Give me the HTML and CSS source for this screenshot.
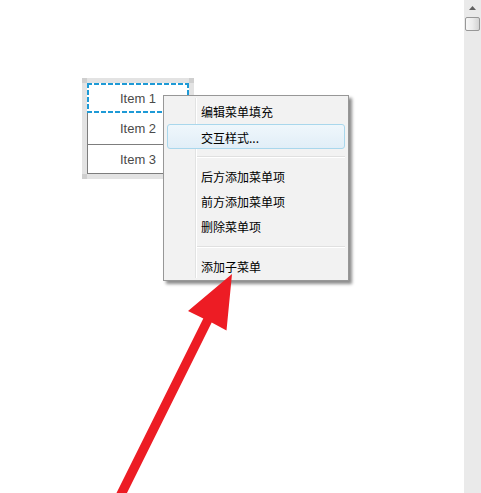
FILE: index.html
```html
<!DOCTYPE html>
<html lang="zh-CN">
<head>
<meta charset="utf-8">
<title>菜单</title>
<link rel="stylesheet" href="styles.css">
</head>
<body>
<div class="app">
  <div class="canvas">
    <div class="widget">
      <div class="items">
        <div class="item sel">Item 1</div>
        <div class="item mid">Item 2</div>
        <div class="item last">Item 3</div>
      </div>
    </div>
    <div class="menu">
      <div class="mi">编辑菜单填充</div>
      <div class="mi hot">交互样式...</div>
      <div class="sep"></div>
      <div class="mi">后方添加菜单项</div>
      <div class="mi">前方添加菜单项</div>
      <div class="mi">删除菜单项</div>
      <div class="sep"></div>
      <div class="mi">添加子菜单</div>
    </div>
    <svg class="arrow" width="464" height="493" viewBox="0 0 464 493">
      <polygon points="232,274 226.5,330.5 211.7,322.6 122.5,502 114,498 203.3,318.4 188,311" fill="#ed1c24"/>
    </svg>
  </div>
  <div class="scrollbar">
    <div class="sb-up"><svg width="7" height="4" viewBox="0 0 7 4"><polygon points="0,4 3.5,0 7,4" fill="#606060"/></svg></div>
    <div class="sb-thumb"></div>
  </div>
</div>
</body>
</html>
```
FILE: styles.css
```css
html, body {
  margin: 0;
  height: 100%;
  background: #fff;
  overflow: hidden;
}

.app {
  display: flex;
  height: 493px;
}

.canvas {
  flex: 1;
  position: relative;
  box-sizing: border-box;
  padding: 78px 0 0 82px;
}

.widget {
  width: 112px;
  box-sizing: border-box;
  padding: 5px;
  background:
    linear-gradient(#cfcfcf, #cfcfcf) left top / 5px 5px no-repeat,
    linear-gradient(#cfcfcf, #cfcfcf) right top / 5px 5px no-repeat,
    linear-gradient(#cfcfcf, #cfcfcf) left bottom / 5px 5px no-repeat,
    linear-gradient(#cfcfcf, #cfcfcf) right bottom / 5px 5px no-repeat,
    #e3e3e3;
}

.items {
  background: #fff;
}

.item {
  box-sizing: border-box;
  font: 13px "Liberation Sans", Arial, sans-serif;
  color: #4a4a4a;
  text-align: center;
}

.item.sel {
  height: 30px;
  line-height: 31px;
  background:
    repeating-linear-gradient(90deg, #1e9ad6 0 5px, transparent 5px 7px) left top / 100% 2px no-repeat,
    repeating-linear-gradient(90deg, #1e9ad6 0 5px, transparent 5px 7px) left bottom / 100% 2px no-repeat,
    repeating-linear-gradient(180deg, #1e9ad6 0 5px, transparent 5px 7px) left top / 2px 100% no-repeat,
    repeating-linear-gradient(180deg, #1e9ad6 0 5px, transparent 5px 7px) right top / 2px 100% no-repeat,
    #fff;
}

.item.mid {
  height: 32px;
  line-height: 31px;
  border: 1px solid #7d7d7d;
  border-top: 0;
}

.item.last {
  height: 29px;
  line-height: 29px;
  border: 1px solid #7d7d7d;
  border-top: 0;
}

.menu {
  position: absolute;
  left: 163px;
  top: 95px;
  width: 186px;
  box-sizing: border-box;
  border: 1px solid #979797;
  padding: 3px 3px 1px;
  background:
    linear-gradient(90deg, transparent 31px, #e2e3e3 31px 32px, #ffffff 32px 33px, transparent 33px) 0 2px / 100% calc(100% - 4px) no-repeat,
    #f2f2f2;
  box-shadow: 3px 3px 3px rgba(0, 0, 0, 0.45);
}

.mi {
  height: 25px;
  padding-top: 4px;
  line-height: 21px;
  box-sizing: border-box;
  padding-left: 34px;
  font: 12px "Noto Sans CJK SC", "Noto Sans", sans-serif;
  color: #000;
  white-space: nowrap;
}

.mi.hot {
  border: 1px solid #a9d7ec;
  border-radius: 3px;
  padding-left: 33px;
  padding-top: 2px;
  line-height: 21px;
  background: linear-gradient(#eff7fc, #e1eef7);
}

.sep {
  height: 15px;
  background:
    linear-gradient(#e0e0e0, #e0e0e0) 30px 7px / calc(100% - 30px) 1px no-repeat,
    linear-gradient(#ffffff, #ffffff) 30px 8px / calc(100% - 30px) 1px no-repeat;
}

.arrow {
  position: absolute;
  left: 0;
  top: 0;
  overflow: hidden;
}

.scrollbar {
  width: 17px;
  flex: none;
  background: #eaeaea;
}

.sb-up {
  height: 17px;
  display: flex;
  justify-content: center;
  align-items: center;
  padding-bottom: 2px;
  box-sizing: border-box;
}

.sb-up svg {
  display: block;
}

.sb-thumb {
  height: 14px;
  margin: 0 1px;
  box-sizing: border-box;
  border: 1px solid #979797;
  border-radius: 2px;
  background: linear-gradient(90deg, #f7f7f7, #ececec 50%, #d3d3d3);
}
```
